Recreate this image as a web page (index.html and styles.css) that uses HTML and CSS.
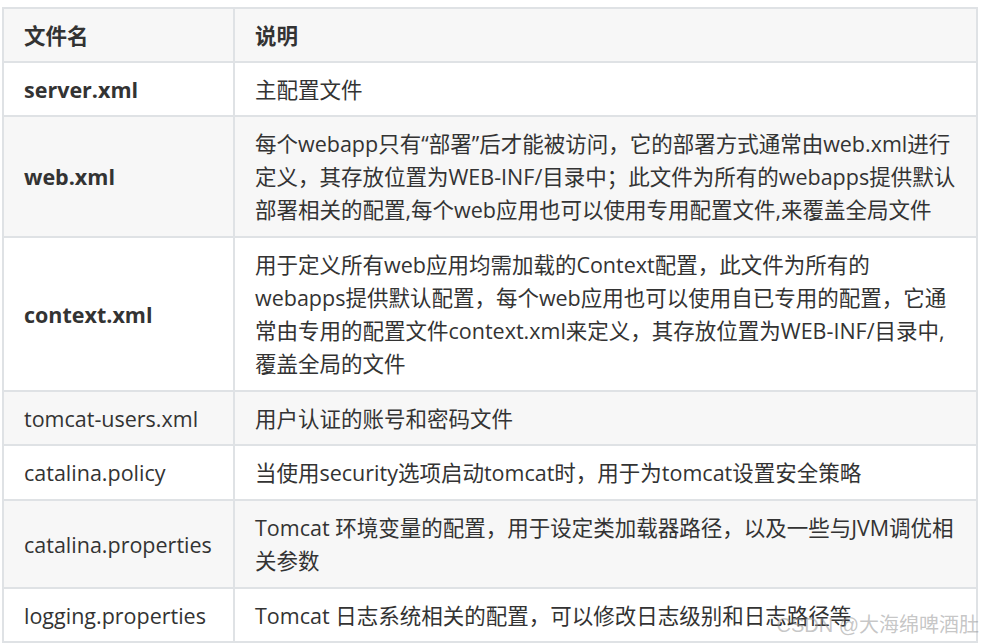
FILE: index.html
```html
<!DOCTYPE html>
<html lang="zh-CN">
<head>
<meta charset="utf-8">
<title>Tomcat 配置文件</title>
<link rel="stylesheet" href="styles.css">
</head>
<body>
<div class="page">
  <table class="conf">
    <colgroup><col class="c1"><col class="c2"></colgroup>
    <thead>
      <tr><th>文件名</th><th>说明</th></tr>
    </thead>
    <tbody>
      <tr><td class="b">server.xml</td><td>主配置文件</td></tr>
      <tr class="multi"><td class="b">web.xml</td><td>每个webapp只有“部署”后才能被访问，它的部署方式通常由web.xml进行<br>定义，其存放位置为WEB-INF/目录中；此文件为所有的webapps提供默认<br>部署相关的配置,每个web应用也可以使用专用配置文件,来覆盖全局文件</td></tr>
      <tr class="multi"><td class="b">context.xml</td><td>用于定义所有web应用均需加载的Context配置，此文件为所有的<br>webapps提供默认配置，每个web应用也可以使用自已专用的配置，它通<br>常由专用的配置文件context.xml来定义，其存放位置为WEB-INF/目录中,<br>覆盖全局的文件</td></tr>
      <tr><td>tomcat-users.xml</td><td>用户认证的账号和密码文件</td></tr>
      <tr class="multi"><td>catalina.policy</td><td>当使用security选项启动tomcat时，用于为tomcat设置安全策略</td></tr>
      <tr class="multi"><td>catalina.properties</td><td>Tomcat 环境变量的配置，用于设定类加载器路径，以及一些与JVM调优相<br>关参数</td></tr>
      <tr><td>logging.properties</td><td>Tomcat 日志系统相关的配置，可以修改日志级别和日志路径等</td></tr>
    </tbody>
  </table>
  <div class="watermark">CSDN @大海绵啤酒肚</div>
</div>
</body>
</html>
```
FILE: styles.css
```css
html, body {
  margin: 0;
  padding: 0;
  background: #ffffff;
}
.page {
  position: relative;
  width: 981px;
  height: 643px;
  overflow: hidden;
  padding: 7px 0 0 2px;
  box-sizing: border-box;
}
.conf {
  border-collapse: collapse;
  table-layout: fixed;
  width: 976px;
  font-family: "Open Sans", "Noto Sans CJK SC", sans-serif;
  font-size: 21.5px;
  line-height: 33px;
  color: #333333;
}
.c1 { width: 231px; }
.conf th, .conf td {
  border: 2px solid #dfe2e5;
  padding: 10px 20px 9px 20px;
  text-align: left;
  vertical-align: middle;
  white-space: nowrap;
}
.conf tr.multi td {
  padding-bottom: 10px;
}
.conf th {
  font-weight: 700;
}
.conf thead tr {
  background: #f7f7f7;
}
.conf tbody tr:nth-child(2n) {
  background: #f7f7f7;
}
.conf td.b {
  font-weight: 700;
}
.watermark {
  position: absolute;
  right: 2px;
  top: 612px;
  font-family: "Liberation Sans", "Noto Sans CJK SC", sans-serif;
  font-size: 20px;
  line-height: 26px;
  color: rgba(150, 150, 150, 0.55);
  white-space: nowrap;
}
```
